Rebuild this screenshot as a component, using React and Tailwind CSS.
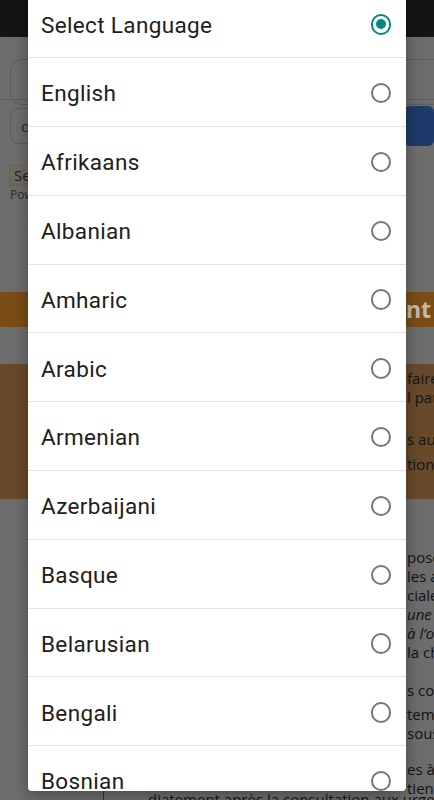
import React from "react";

const languages = [
  "English",
  "Afrikaans",
  "Albanian",
  "Amharic",
  "Arabic",
  "Armenian",
  "Azerbaijani",
  "Basque",
  "Belarusian",
  "Bengali",
  "Bosnian",
  "Bulgarian",
];

function Radio({ checked }) {
  return (
    <span
      className={
        "mt-[2px] flex h-[20.5px] w-[20.5px] shrink-0 items-center justify-center rounded-full border-2 " +
        (checked ? "border-[#00897b]" : "border-[#757575]")
      }
    >
      {checked && <span className="h-[10px] w-[10px] rounded-full bg-[#00897b]" />}
    </span>
  );
}

function Row({ label, checked, last }) {
  return (
    <div
      className={
        "flex h-[68.8px] shrink-0 items-center justify-between pl-[13px] pr-[15px] " +
        (last ? "" : "border-b border-[#e2e2e2]")
      }
    >
      <span className="pt-[3px] text-[22.5px] leading-none text-[#202020] tracking-[0.35px]">{label}</span>
      <Radio checked={checked} />
    </div>
  );
}

function Line({ children, className = "" }) {
  return (
    <div className={"whitespace-nowrap pl-[407px] text-[15px] leading-[19px] " + className}>{children}</div>
  );
}

export default function App() {
  return (
    <div
      className="relative h-[800px] w-[434px] overflow-hidden bg-[#6d6d6d]"
      style={{ fontFamily: "'Open Sans', 'Noto Sans', sans-serif" }}
    >
      {/* dimmed page behind the dialog */}
      <div className="h-[37px] bg-[#141414]" />
      <div className="border-b border-[#5e5e5e] pt-[22px]">
        <div className="ml-[10px] flex h-[46px] w-[440px] items-center rounded-[12px] border border-[#5c5c5c] pl-[14px] -mb-[6px]">
          <span className="text-[20px] font-bold leading-none text-[#1e1e1e]">⋮</span>
        </div>
      </div>
      <div className="mt-[6px] flex items-center">
        <div className="ml-[10px] flex h-[36px] w-[390px] items-center rounded-[8px] border border-[#5c5c5c] pl-[10px] text-[15px] text-[#2a2a2a]">
          o
        </div>
        <div className="ml-[6px] h-[40px] w-[30px] rounded-[6px] bg-[#1d3a6a]" />
      </div>
      <div className="ml-[9px] mt-[19px] flex h-[21px] w-[60px] items-center border border-[#7a6230] bg-[#6f6a5e] pl-[4px] text-[15px] text-[#1e1e1e]">
        Se
      </div>
      <div className="ml-[10px] mt-[1px] text-[12px] leading-[16px] text-[#2b2b2b]">Powered by</div>

      <div className="mt-[89px] flex h-[35px] items-center bg-[#7a4d17] pl-[406px] text-[23px] font-bold whitespace-nowrap text-[#c4b9ae]">
        nt de
      </div>

      <div className="mt-[37px] h-[135px] bg-[#684a2b] pt-[5px] text-[#141414]">
        <Line>faire</Line>
        <Line>l par</Line>
        <Line className="mt-[23px]">s aux</Line>
        <Line className="mt-[6px]">tions</Line>
      </div>

      <div className="pt-[49px] text-[#141414]">
        <Line>posé</Line>
        <Line>les a</Line>
        <Line>ciale</Line>
        <Line className="italic">une</Line>
        <Line className="italic">à l’o</Line>
        <Line>la ch</Line>
        <Line className="mt-[19px]">s con</Line>
        <Line className="mt-[5px]">tem</Line>
        <Line>sous</Line>
        <Line className="mt-[17px]">es à</Line>
        <Line>tient</Line>
      </div>
      <div className="ml-[103px] h-[20px] border-l border-[#3a3a3a] pl-[44px] text-[15px] leading-[19px] whitespace-nowrap text-[#141414] -mt-[8px]">
        diatement après la consultation aux urgences.
      </div>

      {/* dialog */}
      <div
        className="absolute left-[28px] top-[-10.5px] flex h-[801.5px] w-[378px] flex-col overflow-hidden rounded-[4px] bg-white shadow-[0_4px_16px_rgba(0,0,0,0.35)]"
        style={{ fontFamily: "Roboto, 'Noto Sans', sans-serif" }}
      >
        <Row label="Select Language" checked />
        {languages.map((l, i) => (
          <Row key={l} label={l} last={i === languages.length - 1} />
        ))}
      </div>
    </div>
  );
}
